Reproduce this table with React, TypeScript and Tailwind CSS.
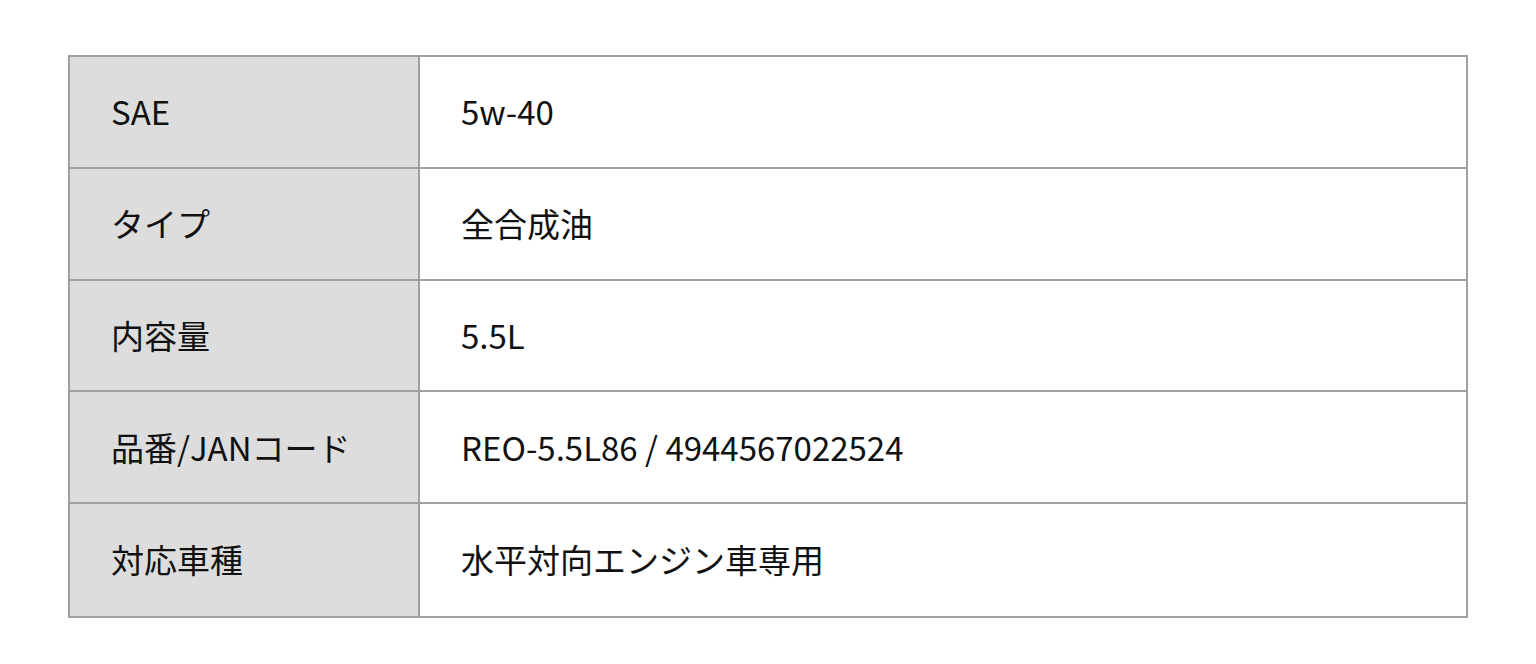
const rows: [string, string][] = [
  ["SAE", "5w-40"],
  ["タイプ", "全合成油"],
  ["内容量", "5.5L"],
  ["品番/JANコード", "REO-5.5L86 / 4944567022524"],
  ["対応車種", "水平対向エンジン車専用"],
];

export default function App() {
  return (
    <div
      className="min-h-screen bg-white px-[68px] pt-[55px] text-[33px] text-[#111]"
      style={{ fontFamily: '"Noto Sans CJK JP", "Noto Sans", sans-serif' }}
    >
      <div className="border-2 border-[#a0a0a0]">
        {rows.map(([label, value], i) => (
          <div
            key={label}
            className={`grid h-[111.8px] grid-cols-[350px_1fr] ${i < rows.length - 1 ? "border-b-2 border-[#a0a0a0]" : ""}`}
          >
            <div className="flex items-center border-r-2 border-[#a0a0a0] bg-[#dddddd] pl-[41px]">
              {label}
            </div>
            <div className="flex items-center pl-[41px]">{value}</div>
          </div>
        ))}
      </div>
    </div>
  );
}
